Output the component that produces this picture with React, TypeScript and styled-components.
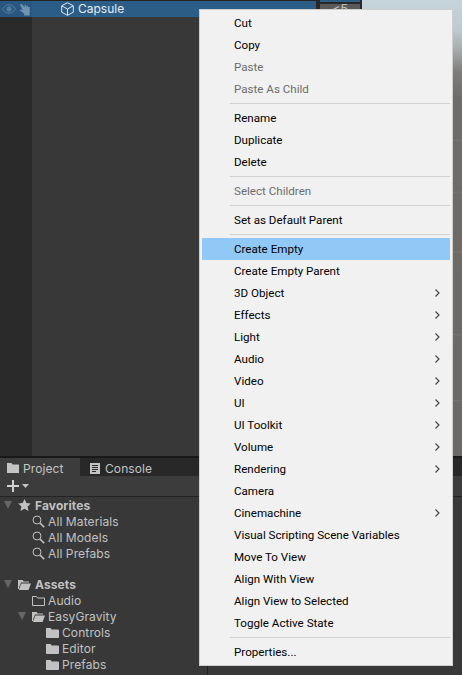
import React from "react";
import styled, { createGlobalStyle } from "styled-components";

const Global = createGlobalStyle`
  html, body { margin: 0; padding: 0; background: #383838; }
  #root { width: 462px; height: 675px; overflow: hidden; }
`;

const Page = styled.div`
  position: relative;
  width: 462px;
  height: 675px;
  overflow: hidden;
  display: flex;
  flex-direction: column;
  font-family: Inter, "Liberation Sans", sans-serif;
  font-size: 12px;
  color: #c8c8c8;
`;

const TopArea = styled.div`
  height: 456px;
  display: flex;
  flex: none;
`;

const Hierarchy = styled.div`
  width: 316px;
  flex: none;
  background: linear-gradient(to right, #2a2a2a 0 32px, #383838 32px);
  border-top: 1px solid #232323;
  box-sizing: border-box;
`;

const SelectedRow = styled.div`
  height: 16px;
  display: flex;
  align-items: center;
  background: linear-gradient(to right, #2a5780 0 32px, #2c5d87 32px);
  color: #e8eef3;
`;

const VisIcons = styled.div`
  width: 61px;
  flex: none;
  display: flex;
  align-items: center;
  gap: 3px;
  padding-left: 2px;
  box-sizing: border-box;
`;

const RowLabel = styled.span`
  margin-left: 4px;
  line-height: 16px;
`;

const InspectorStrip = styled.div`
  width: 46px;
  flex: none;
  background: #282828;
  padding: 0 2px 0 4px;
  box-sizing: border-box;
`;

const StripBand = styled.div`
  height: 2px;
  background: #2c5d87;
`;

const StripButton = styled.div`
  height: 20px;
  margin-top: 2px;
  background: #5a5a5a;
  color: #c0c0c0;
  font-size: 13px;
  line-height: 11px;
  text-align: center;
`;

const Scene = styled.div`
  flex: 1;
  position: relative;
  background: linear-gradient(to bottom, #c6d4db 0, #bdcad0 30px, #a2a8a9 52px, #7f7d7a 72px, #6f6b66 100px, #6c6863 456px);
`;

const SceneGrid = styled.svg`
  display: block;
  width: 100%;
  height: 100%;
`;

const BottomArea = styled.div`
  flex: 1;
  display: flex;
  flex-direction: column;
  background: #383838;
  min-height: 0;
  border-top: 2px solid #191919;
`;

const TabBar = styled.div`
  height: 18px;
  flex: none;
  display: flex;
  background: #282828;
`;

const Tab = styled.div<{ $active?: boolean }>`
  width: ${(p) => (p.$active ? "80px" : "auto")};
  box-sizing: border-box;
  display: flex;
  align-items: center;
  gap: 4px;
  padding: 2px 0 0 ${(p) => (p.$active ? "7px" : "10px")};
  background: ${(p) => (p.$active ? "#3c3c3c" : "transparent")};
  color: #c4c4c4;
  letter-spacing: 0.1px;
`;

const Toolbar = styled.div`
  height: 21px;
  flex: none;
  display: flex;
  align-items: center;
  padding-left: 7px;
  gap: 3px;
  background: #3c3c3c;
  border-bottom: 1px solid #232323;
  box-sizing: border-box;
`;

const Panes = styled.div`
  flex: 1;
  display: flex;
  min-height: 0;
`;

const Tree = styled.div`
  width: 207px;
  flex: none;
  border-right: 1px solid #232323;
  overflow: hidden;
`;

const TreeRow = styled.div<{ $depth: number; $gapBefore?: boolean }>`
  height: 16px;
  display: flex;
  align-items: center;
  padding-left: ${(p) => 4 + p.$depth * 14}px;
  margin-top: ${(p) => (p.$gapBefore ? "15px" : "0")};
  white-space: nowrap;
  color: #c2c2c2;
`;

const Caret = styled.span<{ $open: boolean }>`
  width: 14px;
  flex: none;
  display: flex;
  align-items: center;
  &::before {
    content: "";
    display: ${(p) => (p.$open ? "block" : "none")};
    width: 0;
    height: 0;
    border-left: 4px solid transparent;
    border-right: 4px solid transparent;
    border-top: 8px solid #666666;
  }
`;

const TreeLabel = styled.span<{ $bold?: boolean }>`
  margin-left: ${(p) => (p.$bold ? "4px" : "3px")};
  font-weight: ${(p) => (p.$bold ? 700 : 400)};
  letter-spacing: 0.1px;
`;

const Menu = styled.div`
  position: absolute;
  left: 199px;
  top: 9px;
  width: 254px;
  height: 657px;
  box-sizing: border-box;
  padding: 2px;
  background: #f1f1f1;
  border: 1px solid #cfcfcf;
  font-family: Roboto, "Noto Sans", sans-serif;
  font-size: 11.6px;
  color: #000;
`;

const MenuItem = styled.div<{ $disabled?: boolean; $active?: boolean }>`
  height: 22px;
  box-sizing: border-box;
  display: flex;
  align-items: center;
  justify-content: space-between;
  padding: 0 10px 1px 32px;
  white-space: nowrap;
  color: ${(p) => (p.$disabled ? "#6d6d6d" : "#000")};
  background: ${(p) => (p.$active ? "#90c8f6" : "transparent")};
`;

const MenuSeparator = styled.div`
  height: 1px;
  margin: 3px 0 3px 28px;
  background: #d2d2d2;
`;

const Chevron = styled.svg`
  width: 5px;
  height: 8px;
  flex: none;
`;

type Entry = string | { label: string; disabled?: boolean; active?: boolean; sub?: boolean } | null;

const entries: Entry[] = [
  "Cut",
  "Copy",
  { label: "Paste", disabled: true },
  { label: "Paste As Child", disabled: true },
  null,
  "Rename",
  "Duplicate",
  "Delete",
  null,
  { label: "Select Children", disabled: true },
  null,
  "Set as Default Parent",
  null,
  { label: "Create Empty", active: true },
  "Create Empty Parent",
  { label: "3D Object", sub: true },
  { label: "Effects", sub: true },
  { label: "Light", sub: true },
  { label: "Audio", sub: true },
  { label: "Video", sub: true },
  { label: "UI", sub: true },
  { label: "UI Toolkit", sub: true },
  { label: "Volume", sub: true },
  { label: "Rendering", sub: true },
  "Camera",
  { label: "Cinemachine", sub: true },
  "Visual Scripting Scene Variables",
  "Move To View",
  "Align With View",
  "Align View to Selected",
  "Toggle Active State",
  null,
  "Properties...",
];

const Eye = () => (
  <svg width="14" height="10" viewBox="0 0 14 10" fill="none">
    <path d="M.5 5C2.5 2 4.7.8 7 .8S11.5 2 13.5 5C11.5 8 9.3 9.2 7 9.2S2.5 8 .5 5Z" stroke="#527ca0" strokeWidth="1" />
    <circle cx="7" cy="5" r="2.6" fill="#527ca0" />
  </svg>
);

const Hand = () => (
  <svg width="13" height="13" viewBox="0 0 13 13">
    <path
      d="M1 1.5 2.2.8 5.6 4.2V1.8h1.2l.3 2.4.7-1.6 1 .3.1 1.6.8-.8 1 .5v3.6L10.6 11v1.6H5.2V11L3 8.8.8 7.6l.8-1 2.2.7L1 1.5Z"
      fill="#6f93b2"
    />
  </svg>
);

const Cube = () => (
  <svg width="13" height="14" viewBox="0 0 13 14" fill="none" stroke="#dfe7ee" strokeWidth="1" strokeLinejoin="round">
    <path d="M6.5.7 12.3 3.8V10.2L6.5 13.3.7 10.2V3.8L6.5.7Z" />
    <path d="M.9 3.9 6.5 7 12.1 3.9M6.5 7V13.2" />
  </svg>
);

const FolderSolid = () => (
  <svg width="13" height="11" viewBox="0 0 13 11" style={{ flex: "none" }}>
    <path d="M0 1h4.6l1.2 1.5H12a1 1 0 0 1 1 1V10a1 1 0 0 1-1 1H1a1 1 0 0 1-1-1V1Z" fill="#c2c2c2" />
  </svg>
);

const FolderLine = () => (
  <svg width="13" height="11" viewBox="0 0 13 11" fill="none" style={{ flex: "none" }}>
    <path d="M.5 1.5h4l1.2 1.5h6.8v7.5H.5V1.5Z" stroke="#c2c2c2" />
  </svg>
);

const FolderOpen = () => (
  <svg width="13" height="11" viewBox="0 0 13 11" style={{ flex: "none" }}>
    <path d="M0 1h4.6l1.2 1.5H11v1H3L1 8.4V10H0V1Z" fill="#c2c2c2" />
    <path d="M3.4 4.6H13L10.6 11H.8L3.4 4.6Z" fill="#c2c2c2" />
  </svg>
);

const Star = () => (
  <svg width="13" height="12" viewBox="0 0 13 12" style={{ flex: "none" }}>
    <path d="M6.5 0 8.4 4l4.4.5-3.2 3 .9 4.4-4-2.2-4 2.2.9-4.4-3.2-3L4.6 4 6.5 0Z" fill="#c2c2c2" />
  </svg>
);

const Search = () => (
  <svg width="13" height="13" viewBox="0 0 13 13" fill="none" stroke="#c2c2c2" style={{ flex: "none" }}>
    <circle cx="5" cy="5" r="4" strokeWidth="1" />
    <path d="M8 8l4.2 4.2" strokeWidth="1.6" />
  </svg>
);

const ConsoleIcon = () => (
  <svg width="11" height="11" viewBox="0 0 11 11" style={{ flex: "none" }}>
    <path d="M0 0h10v11H0V0Z" fill="#c4c4c4" />
    <path d="M2 2.5h6M2 4.5h6M2 6.5h6M2 8.5h4" stroke="#282828" strokeWidth="1" />
  </svg>
);

const TabFolder = () => (
  <svg width="12" height="10" viewBox="0 0 12 10" style={{ flex: "none" }}>
    <path d="M0 0h4.4l1.2 1.4H12V10H0V0Z" fill="#c4c4c4" />
  </svg>
);

const Plus = () => (
  <svg width="12" height="12" viewBox="0 0 12 12" style={{ flex: "none" }}>
    <path d="M6 0v12M0 6h12" stroke="#d0d0d0" strokeWidth="2" />
  </svg>
);

const DropCaret = () => (
  <svg width="7" height="4" viewBox="0 0 7 4" style={{ flex: "none" }}>
    <path d="M0 0h7L3.5 4Z" fill="#c4c4c4" />
  </svg>
);

export default function App() {
  return (
    <Page>
      <Global />
      <TopArea>
        <Hierarchy>
          <SelectedRow>
            <VisIcons>
              <Eye />
              <Hand />
            </VisIcons>
            <Cube />
            <RowLabel>Capsule</RowLabel>
          </SelectedRow>
        </Hierarchy>
        <InspectorStrip>
          <StripBand />
          <StripButton>&lt;5</StripButton>
        </InspectorStrip>
        <Scene>
          <SceneGrid viewBox="0 0 100 456" preserveAspectRatio="none">
            <path
              d="M0 148 100 140M0 196 100 192M0 250 100 252M0 330 100 335M0 410 100 400"
              stroke="#7b7772"
              strokeWidth="1"
              fill="none"
            />
          </SceneGrid>
        </Scene>
      </TopArea>
      <BottomArea>
        <TabBar>
          <Tab $active>
            <TabFolder />
            Project
          </Tab>
          <Tab>
            <ConsoleIcon />
            Console
          </Tab>
        </TabBar>
        <Toolbar>
          <Plus />
          <DropCaret />
        </Toolbar>
        <Panes>
          <Tree>
            <TreeRow $depth={0}>
              <Caret $open />
              <Star />
              <TreeLabel $bold>Favorites</TreeLabel>
            </TreeRow>
            {["All Materials", "All Models", "All Prefabs"].map((t) => (
              <TreeRow $depth={1} key={t}>
                <Caret $open={false} />
                <Search />
                <TreeLabel>{t}</TreeLabel>
              </TreeRow>
            ))}
            <TreeRow $depth={0} $gapBefore>
              <Caret $open />
              <FolderOpen />
              <TreeLabel $bold>Assets</TreeLabel>
            </TreeRow>
            <TreeRow $depth={1}>
              <Caret $open={false} />
              <FolderLine />
              <TreeLabel>Audio</TreeLabel>
            </TreeRow>
            <TreeRow $depth={1}>
              <Caret $open />
              <FolderOpen />
              <TreeLabel>EasyGravity</TreeLabel>
            </TreeRow>
            {["Controls", "Editor", "Prefabs"].map((t) => (
              <TreeRow $depth={2} key={t}>
                <Caret $open={false} />
                <FolderSolid />
                <TreeLabel>{t}</TreeLabel>
              </TreeRow>
            ))}
          </Tree>
        </Panes>
      </BottomArea>
      <Menu>
        {entries.map((e, i) => {
          if (e === null) return <MenuSeparator key={i} />;
          const item = typeof e === "string" ? { label: e } : e;
          return (
            <MenuItem key={i} $disabled={item.disabled} $active={item.active}>
              {item.label}
              {item.sub && (
                <Chevron viewBox="0 0 5 8" fill="none">
                  <path d="M.5.5 4 4 .5 7.5" stroke="#404040" strokeWidth="1.1" />
                </Chevron>
              )}
            </MenuItem>
          );
        })}
      </Menu>
    </Page>
  );
}
